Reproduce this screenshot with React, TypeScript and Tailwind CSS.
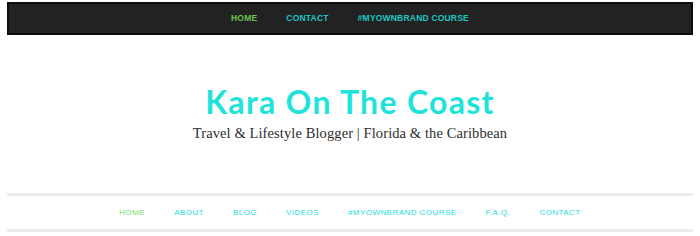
export default function App() {
  const topNav = [
    { label: "Home", active: true },
    { label: "Contact", active: false },
    { label: "#MyOwnBrand Course", active: false },
  ];
  const mainNav = [
    { label: "Home", active: true },
    { label: "About", active: false },
    { label: "Blog", active: false },
    { label: "Videos", active: false },
    { label: "#MyOwnBrand Course", active: false },
    { label: "F.A.Q.", active: false },
    { label: "Contact", active: false },
  ];

  return (
    <div className="h-[236px] w-[700px] overflow-hidden bg-white px-[7px] pt-[2px]">
      <header className="flex h-[33px] items-center justify-center gap-[29px] border-2 border-[#0d0d0d] bg-[#222222] font-['Liberation_Sans',sans-serif] text-[8.5px] font-bold uppercase tracking-[0.2px]">
        {topNav.map((item) => (
          <a key={item.label} href="#" className={item.active ? "text-[#6bc24f]" : "text-[#19c6c2]"}>
            {item.label}
          </a>
        ))}
      </header>

      <div className="flex h-[158px] flex-col items-center pt-[47px]">
        <h1 className="font-['Lato',sans-serif] text-[32px] font-bold leading-[40px] tracking-[1.3px] text-[#1ee3da]">
          Kara On The Coast
        </h1>
        <p className="mt-[1px] font-['Liberation_Serif',serif] text-[14.5px] leading-[20px] tracking-[0.1px] text-[#2d2d2d]">
          Travel &amp; Lifestyle Blogger | Florida &amp; the Caribbean
        </p>
      </div>

      <nav className="border-y-[3px] border-[#ececec]">
        <ul className="flex h-[33px] items-center justify-center gap-[29px] font-['Liberation_Sans',sans-serif] text-[8px] uppercase tracking-[0.45px]">
          {mainNav.map((item) => (
            <li key={item.label}>
              <a href="#" className={item.active ? "text-[#78e06a]" : "text-[#22e0e0]"}>
                {item.label}
              </a>
            </li>
          ))}
        </ul>
      </nav>
    </div>
  );
}
